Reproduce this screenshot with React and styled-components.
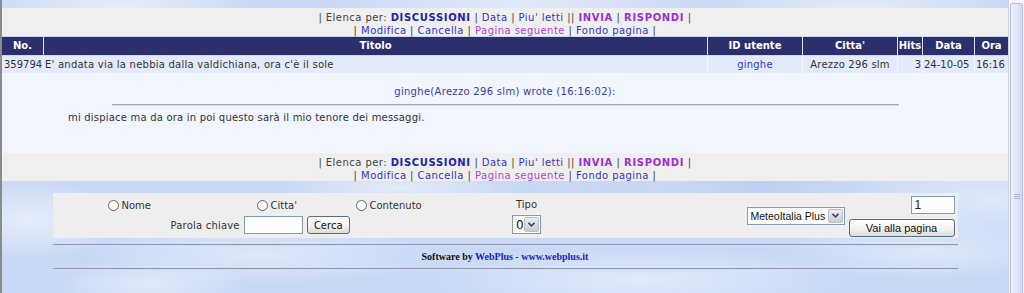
import React from "react";
import styled, { createGlobalStyle } from "styled-components";

const GlobalStyle = createGlobalStyle`
  html, body {
    margin: 0;
    padding: 0;
    height: 293px;
    overflow: hidden;
  }
  body {
    font-family: "DejaVu Sans", Verdana, sans-serif;
    font-size: 10px;
    color: #333;
  }
`;

const COLS = "41px 663px 94px 94px 24px 51px 33px";

const Window = styled.div`
  display: flex;
  width: 1024px;
  height: 293px;
  background-color: #c9d9f5;
  background-image:
    radial-gradient(ellipse 140px 30px at 120px 6px, rgba(255,255,255,.55), transparent),
    radial-gradient(ellipse 200px 25px at 520px 4px, rgba(255,255,255,.45), transparent),
    radial-gradient(ellipse 160px 28px at 860px 8px, rgba(255,255,255,.5), transparent),
    radial-gradient(ellipse 90px 40px at 30px 220px, rgba(255,255,255,.55), transparent),
    radial-gradient(ellipse 180px 30px at 260px 255px, rgba(255,255,255,.4), transparent),
    radial-gradient(ellipse 220px 35px at 640px 280px, rgba(255,255,255,.45), transparent),
    radial-gradient(ellipse 150px 30px at 930px 250px, rgba(255,255,255,.4), transparent),
    radial-gradient(ellipse 120px 20px at 400px 188px, rgba(255,255,255,.5), transparent),
    radial-gradient(ellipse 110px 20px at 760px 186px, rgba(180,200,240,.6), transparent),
    radial-gradient(ellipse 100px 25px at 150px 285px, rgba(255,255,255,.45), transparent),
    radial-gradient(ellipse 160px 40px at 990px 200px, rgba(255,255,255,.4), transparent);
`;

const LeftFrame = styled.div`
  flex: none;
  width: 2px;
  background: #8b8b8b;
`;

const Main = styled.main`
  flex: 1;
  display: flex;
  flex-direction: column;
  padding-top: 8px;
  min-width: 0;
`;

const NavBar = styled.div`
  box-sizing: border-box;
  height: 28px;
  padding-top: 3px;
  background: #efefef;
  text-align: center;
  line-height: 13px;
  letter-spacing: 0.45px;
  color: #444;
`;

const NavLink = styled.a`
  color: ${(p) => (p.$visited ? "#b13fd6" : p.$strong ? "#9b2fd0" : "#3434c8")};
  font-weight: ${(p) => (p.$bold ? "bold" : "normal")};
  letter-spacing: ${(p) => (p.$bold ? "0.65px" : "inherit")};
  text-decoration: none;
  ${(p) => p.$main && "color: #2323a8;"}
`;

const Grid = styled.div`
  display: grid;
  grid-template-columns: ${COLS};
  column-gap: 1px;
  margin-top: 1px;
  background: ${(p) => p.$line};
`;

const HeadCell = styled.div`
  height: 18px;
  line-height: 18px;
  background: #2b2f6c;
  color: #fff;
  font-weight: bold;
  text-align: center;
  white-space: nowrap;
  overflow: hidden;
`;

const Cell = styled.div`
  height: 17px;
  line-height: 17px;
  background: #e3ebfb;
  color: ${(p) => p.$color || "#333"};
  text-align: ${(p) => p.$align || "left"};
  padding: 0 ${(p) => p.$pad ?? 1}px;
  letter-spacing: ${(p) => p.$ls || 0}px;
  white-space: nowrap;
  overflow: hidden;
`;

const Message = styled.div`
  box-sizing: border-box;
  height: 80px;
  padding-top: 12px;
  background: #f1f5fd;
`;

const Wrote = styled.div`
  text-align: center;
  line-height: 14px;
  letter-spacing: 0.3px;
  color: #3a3aac;
`;

const Rule = styled.hr`
  box-sizing: border-box;
  width: ${(p) => p.$w}px;
  height: 2px;
  margin: ${(p) => p.$m || "0 auto"};
  border: none;
  border-top: 1px solid ${(p) => p.$c || "#a4a6ab"};
  border-bottom: 1px solid #d8dbe2;
`;

const Body = styled.p`
  margin: 5px 0 0 66px;
  line-height: 14px;
  letter-spacing: 0.2px;
  color: #333;
`;

const Bottom = styled.div`
  width: 905px;
  margin: 12px auto 0;
`;

const Panel = styled.form`
  display: flex;
  box-sizing: border-box;
  height: 45px;
  background: #eeeeee;
`;

const Column = styled.div`
  flex: none;
  width: ${(p) => p.$w}px;
  display: flex;
  flex-direction: column;
  align-items: ${(p) => p.$align || "stretch"};
  justify-content: ${(p) => (p.$center ? "center" : "flex-start")};
  padding-top: ${(p) => p.$top ?? 0}px;
  margin-right: ${(p) => p.$mr ?? 0}px;
`;

const RadioRow = styled.div`
  display: grid;
  grid-template-columns: 149px 99px auto;
  height: 16px;
  padding-left: 55px;
  align-items: center;
`;

const RadioLabel = styled.label`
  display: flex;
  align-items: center;
  gap: 3px;
  color: #333;
`;

const Radio = styled.input.attrs({ type: "radio" })`
  appearance: none;
  margin: 0;
  width: 11px;
  height: 11px;
  border: 1px solid #56647c;
  border-radius: 50%;
  background: #fff;
  box-sizing: border-box;
`;

const KeyRow = styled.div`
  display: flex;
  align-items: center;
  gap: 4px;
  margin-top: 3px;
  padding-left: 118px;
  color: #333;
  letter-spacing: 0.2px;
`;

const TextBox = styled.input`
  box-sizing: border-box;
  width: ${(p) => p.$w}px;
  height: 18px;
  margin: 0;
  padding: 0 3px;
  border: 1px solid #7f9db9;
  background: #fff;
  font: 12px "Liberation Sans", Arial, sans-serif;
  color: #222;
`;

const Button = styled.button`
  box-sizing: border-box;
  width: ${(p) => p.$w}px;
  height: 18px;
  margin: 0;
  padding: 0;
  border: 1px solid #5b6a86;
  border-radius: 3px;
  background: linear-gradient(#ffffff, #f1f1ee 60%, #dcdcd6);
  color: #111;
  font: ${(p) => p.$font || `10px "DejaVu Sans", Verdana, sans-serif`};
  line-height: 15px;
`;

const Select = styled.div`
  box-sizing: border-box;
  display: flex;
  align-items: center;
  width: ${(p) => p.$w}px;
  height: ${(p) => p.$h || 18}px;
  border: 1px solid #7f9db9;
  background: #fff;
  font: ${(p) => p.$font || `10.5px "Liberation Sans", Arial, sans-serif`};
  color: #111;
`;

const SelectText = styled.span`
  flex: 1;
  padding-left: 3px;
  white-space: nowrap;
  overflow: hidden;
`;

const DropButton = styled.span`
  box-sizing: border-box;
  display: flex;
  align-items: center;
  justify-content: center;
  flex: none;
  width: 15px;
  align-self: stretch;
  margin: 1px;
  border: 1px solid #b9bdc9;
  border-radius: 2px;
  background: linear-gradient(#eceef3, #c9ccd8);
`;

const TipoLabel = styled.div`
  height: 16px;
  line-height: 16px;
  color: #333;
`;

const Footer = styled.div`
  height: 22px;
  text-align: center;
  font: bold 10px/22px "Liberation Serif", "Times New Roman", serif;
  color: #111;
  span {
    color: #1c1cc8;
  }
`;

const Scrollbar = styled.div`
  flex: none;
  width: 16px;
  box-sizing: border-box;
  border-left: 1px solid #d0d3dc;
  background: #f4f5fa;
  padding: 3px 1px 0 1px;
  display: flex;
`;

const Thumb = styled.div`
  flex: 1;
  box-sizing: border-box;
  border: 1px solid #b5c0e4;
  border-bottom: none;
  border-radius: 3px 3px 0 0;
  background: linear-gradient(to right, #eef1fd, #dfe5fa 60%, #cfd7f3);
  display: flex;
  flex-direction: column;
  align-items: center;
  padding-top: 190px;
  gap: 1px;
`;

const Grip = styled.span`
  width: 6px;
  height: 1px;
  background: #a9b5dc;
`;

function Chevron() {
  return (
    <svg width="7" height="5" viewBox="0 0 7 5">
      <path d="M0.5 0.8 L3.5 3.8 L6.5 0.8" fill="none" stroke="#3b4660" strokeWidth="1.6" />
    </svg>
  );
}

function Nav() {
  return (
    <NavBar>
      <div>
        | Elenca per: <NavLink $bold $main href="#">DISCUSSIONI</NavLink> |{" "}
        <NavLink href="#">Data</NavLink> | <NavLink href="#">Piu' letti</NavLink> ||{" "}
        <NavLink $bold $strong href="#">INVIA</NavLink> |{" "}
        <NavLink $bold $strong href="#">RISPONDI</NavLink> |
      </div>
      <div>
        | <NavLink href="#">Modifica</NavLink> | <NavLink href="#">Cancella</NavLink> |{" "}
        <NavLink $visited href="#">Pagina seguente</NavLink> |{" "}
        <NavLink href="#">Fondo pagina</NavLink> |
      </div>
    </NavBar>
  );
}

export default function App() {
  return (
    <>
      <GlobalStyle />
      <Window>
        <LeftFrame />
        <Main>
          <Nav />
          <Grid $line="#d7def2">
            <HeadCell>No.</HeadCell>
            <HeadCell>Titolo</HeadCell>
            <HeadCell>ID utente</HeadCell>
            <HeadCell>Citta'</HeadCell>
            <HeadCell>Hits</HeadCell>
            <HeadCell>Data</HeadCell>
            <HeadCell>Ora</HeadCell>
          </Grid>
          <Grid $line="#f1f5fd">
            <Cell $pad={2}>359794</Cell>
            <Cell $ls={0.24}>E' andata via la nebbia dalla valdichiana, ora c'è il sole</Cell>
            <Cell $align="center" $color="#3434c8" $ls={0.2}>ginghe</Cell>
            <Cell $align="center" $ls={0.2}>Arezzo 296 slm</Cell>
            <Cell $align="right">3</Cell>
            <Cell>24-10-05</Cell>
            <Cell>16:16</Cell>
          </Grid>
          <Message>
            <Wrote>ginghe(Arezzo 296 slm) wrote (16:16:02):</Wrote>
            <Rule $w={787} $m="5px auto 0" />
            <Body>mi dispiace ma da ora in poi questo sarà il mio tenore dei messaggi.</Body>
          </Message>
          <Nav />
          <Bottom>
            <Panel>
              <Column $w={459} $top={4}>
                <RadioRow>
                  <RadioLabel><Radio name="campo" />Nome</RadioLabel>
                  <RadioLabel><Radio name="campo" />Citta'</RadioLabel>
                  <RadioLabel><Radio name="campo" />Contenuto</RadioLabel>
                </RadioRow>
                <KeyRow>
                  Parola chiave
                  <TextBox $w={59} />
                  <Button $w={43} type="button">Cerca</Button>
                </KeyRow>
              </Column>
              <Column $w={30} $top={4} $align="center" $mr={205}>
                <TipoLabel>Tipo</TipoLabel>
                <Select $w={29} $h={19} $font={`12px "DejaVu Sans", Verdana, sans-serif`} style={{ marginTop: 2 }}>
                  <SelectText>0</SelectText>
                  <DropButton><Chevron /></DropButton>
                </Select>
              </Column>
              <Column $w={98} $center $mr={4}>
                <Select $w={98}>
                  <SelectText>MeteoItalia Plus</SelectText>
                  <DropButton><Chevron /></DropButton>
                </Select>
              </Column>
              <Column $w={106} $top={3} $align="flex-end">
                <TextBox $w={44} defaultValue="1" />
                <Button $w={106} type="button" $font={`11px "Liberation Sans", Arial, sans-serif`} style={{ marginTop: 5 }}>
                  Vai alla pagina
                </Button>
              </Column>
            </Panel>
            <Rule $w={905} $c="#8f99ae" $m="6px auto 0" />
            <Footer>
              Software by <span>WebPlus - www.webplus.it</span>
            </Footer>
            <Rule $w={905} $c="#8f99ae" />
          </Bottom>
        </Main>
        <Scrollbar>
          <Thumb>
            <Grip />
            <Grip />
            <Grip />
          </Thumb>
        </Scrollbar>
      </Window>
    </>
  );
}
